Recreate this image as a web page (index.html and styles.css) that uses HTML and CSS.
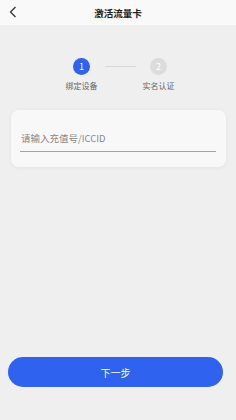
FILE: index.html
```html
<!DOCTYPE html>
<html lang="zh-CN">
<head>
  <meta charset="UTF-8">
  <meta name="viewport" content="width=device-width, initial-scale=1.0">
  <title>激活流量卡</title>
  <link rel="stylesheet" href="styles.css">
</head>
<body>
  <div class="page">
    <div class="header">
      <svg class="back" width="8" height="12" viewBox="0 0 8 12">
        <path d="M6.5 1 L1.5 6 L6.5 11" fill="none" stroke="#333" stroke-width="1.3"/>
      </svg>
      <span class="title">激活流量卡</span>
    </div>

    <div class="steps">
      <div class="step">
        <div class="dot active">1</div>
        <div class="step-label">绑定设备</div>
      </div>
      <div class="line"></div>
      <div class="step">
        <div class="dot">2</div>
        <div class="step-label">实名认证</div>
      </div>
    </div>

    <div class="card">
      <input class="field" type="text" placeholder="请输入充值号/ICCID">
    </div>

    <div class="spacer"></div>

    <button class="next">下一步</button>
  </div>
</body>
</html>
```

FILE: styles.css
```css
* {
  box-sizing: border-box;
}

body {
  margin: 0;
  font-family: "Noto Sans CJK SC", "Noto Sans", sans-serif;
  background-color: #efefef;
}

.page {
  height: 420px;
  display: flex;
  flex-direction: column;
}

.header {
  height: 25px;
  background-color: #f9f9f9;
  display: flex;
  align-items: center;
  justify-content: center;
  position: relative;
  padding-top: 1px;
}

.back {
  position: absolute;
  left: 9px;
  top: 6px;
}

.title {
  font-size: 9.5px;
  font-weight: bold;
  color: #222;
}

.steps {
  display: flex;
  justify-content: center;
  align-items: flex-start;
  padding-top: 33px;
  padding-left: 4px;
}

.step {
  width: 46px;
  display: flex;
  flex-direction: column;
  align-items: center;
}

.dot {
  width: 17px;
  height: 17px;
  border-radius: 50%;
  background-color: #dcdcdc;
  color: #fff;
  font-size: 9px;
  line-height: 17px;
  text-align: center;
}

.dot.active {
  background-color: #2f62ee;
}

.step-label {
  margin-top: 5px;
  font-size: 8px;
  color: #666;
}

.line {
  width: 31px;
  height: 1px;
  margin-top: 8px;
  background-color: #d8d8d8;
}

.card {
  margin: 19px 10px 0 11px;
  height: 57px;
  background-color: #f8f8f8;
  border-radius: 8px;
  box-shadow: 0 1px 4px rgba(0, 0, 0, 0.05);
  padding: 13px 10px 0 9px;
}

.field {
  width: 100%;
  border: none;
  border-bottom: 1px solid #8fa3cc;
  background: transparent;
  font-family: inherit;
  font-size: 9.5px;
  color: #333;
  padding: 4px 1px 6px 1px;
  outline: none;
}

.field::placeholder {
  color: #888;
}

.spacer {
  flex: 1;
}

.next {
  margin: 0 13px 33px 8px;
  height: 30px;
  border: none;
  border-radius: 15px;
  background-color: #2f62ee;
  color: #fff;
  font-family: inherit;
  font-size: 10px;
}
```
